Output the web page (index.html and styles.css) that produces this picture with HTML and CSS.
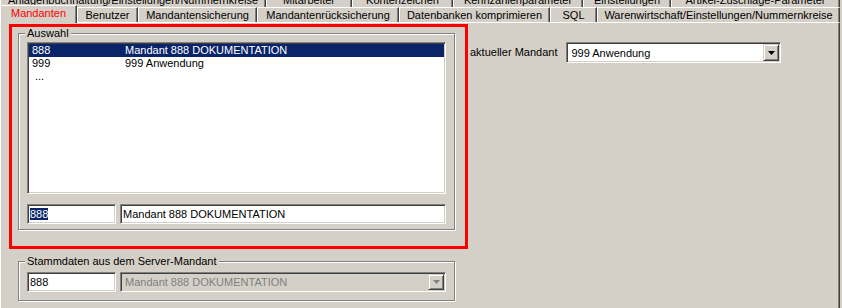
FILE: index.html
```html
<!DOCTYPE html>
<html>
<head>
<meta charset="utf-8" />
<title>Mandanten</title>
<link rel="stylesheet" href="styles.css">
</head>
<body>
<div class="window">
  <div class="tabs tabs-back">
    <span class="tab">Anlagenbuchhaltung/Einstellungen/Nummernkreise</span>
    <span class="tab">Mitarbeiter</span>
    <span class="tab">Kontenzeichen</span>
    <span class="tab">Kennzahlenparameter</span>
    <span class="tab">Einstellungen</span>
    <span class="tab">Artikel-Zuschläge-Parameter</span>
  </div>
  <div class="tabs tabs-front">
    <span class="tab active">Mandanten</span>
    <span class="tab">Benutzer</span>
    <span class="tab">Mandantensicherung</span>
    <span class="tab">Mandantenrücksicherung</span>
    <span class="tab">Datenbanken komprimieren</span>
    <span class="tab">SQL</span>
    <span class="tab">Warenwirtschaft/Einstellungen/Nummernkreise</span>
  </div>

  <div class="panel">
    <div class="left">
      <div class="marker">
        <div class="group">
          <div class="group-title">Auswahl</div>
          <div class="listbox">
            <div class="row selected"><span class="code">888</span><span>Mandant 888 DOKUMENTATION</span></div>
            <div class="row"><span class="code">999</span><span>999 Anwendung</span></div>
            <div class="row more">...</div>
          </div>
          <div class="fields">
            <div class="edit short"><span class="sel">888</span></div>
            <div class="edit long">Mandant 888 DOKUMENTATION</div>
          </div>
        </div>
      </div>

      <div class="group stamm">
        <div class="group-title">Stammdaten aus dem Server-Mandant</div>
        <div class="fields">
          <div class="edit short">888</div>
          <div class="combo long disabled">
            <span class="combo-text">Mandant 888 DOKUMENTATION</span>
            <span class="combo-btn"><svg width="7" height="4" viewBox="0 0 7 4"><path d="M0 0h7L3.5 4z"/></svg></span>
          </div>
        </div>
      </div>
    </div>

    <div class="current">
      <span class="lbl">aktueller Mandant</span>
      <div class="combo">
        <span class="combo-text">999 Anwendung</span>
        <span class="combo-btn"><svg width="7" height="4" viewBox="0 0 7 4"><path d="M0 0h7L3.5 4z"/></svg></span>
      </div>
    </div>
  </div>
</div>
</body>
</html>
```

FILE: styles.css
```css
*{
	margin:0;
	padding:0;
	box-sizing:border-box;
	}
body{
	background:#d4d0c8;
	}
.window{
	width:842px;
	height:308px;
	overflow:hidden;
	background:#d4d0c8;
	font:11px/13px "Liberation Sans", Arial, sans-serif;
	color:#000;
	}

/* tabs */
.tabs{
	display:flex;
	width:840px;
	}
.tab{
	flex:none;
	white-space:nowrap;
	overflow:hidden;
	text-align:center;
	border-top:1px solid #fff;
	border-left:1px solid #fff;
	border-right:1px solid #404040;
	box-shadow:inset -1px 0 0 #808080;
	}
.tabs-back{
	height:7px;
	overflow:hidden;
	}
.tabs-back .tab{
	height:18px;
	margin-top:-11px;
	padding-top:4px;
	}
.tabs-back .tab:nth-child(1){ width:266px; }
.tabs-back .tab:nth-child(2){ width:86px; }
.tabs-back .tab:nth-child(3){ width:101px; }
.tabs-back .tab:nth-child(4){ width:130px; }
.tabs-back .tab:nth-child(5){ width:88px; }
.tabs-back .tab:nth-child(6){ width:169px; }

.tabs-front{
	height:15px;
	}
.tabs-front .tab{
	height:15px;
	padding-top:1px;
	}
.tabs-front .tab:nth-child(1){ width:77px; }
.tabs-front .tab:nth-child(2){ width:61px; }
.tabs-front .tab:nth-child(3){ width:119px; }
.tabs-front .tab:nth-child(4){ width:142px; }
.tabs-front .tab:nth-child(5){ width:151px; }
.tabs-front .tab:nth-child(6){ width:47px; }
.tabs-front .tab:nth-child(7){ width:243px; }
.tabs-front .tab.active{
	height:18px;
	margin-top:-2px;
	padding-top:1px;
	color:#f00;
	background:#d4d0c8;
	position:relative;
	z-index:1;
	}

/* page */
.panel{
	width:840px;
	height:286px;
	display:flex;
	align-items:flex-start;
	padding:1px 0 0 8px;
	border-top:1px solid #fff;
	border-left:1px solid #fff;
	border-right:1px solid #404040;
	box-shadow:inset -1px 0 0 #808080;
	}
.marker{
	width:459px;
	height:225px;
	border:3px solid #f00;
	padding:6px 0 0 6px;
	}

.group{
	width:437px;
	border:1px solid #808080;
	box-shadow:inset 1px 1px 0 #fff, 1px 1px 0 #fff;
	padding:0 8px 5px;
	}
.group-title{
	display:table;
	margin:-7px 0 0 -2px;
	padding:0 2px;
	background:#d4d0c8;
	}
.stamm{
	margin:12px 0 0 9px;
	padding-bottom:8px;
	}
.stamm .fields{
	margin-top:4px;
	}

.sunken{
	border:1px solid;
	}
.listbox, .edit, .combo{
	border:1px solid;
	border-color:#808080 #fff #fff #808080;
	box-shadow:inset 1px 1px 0 #404040, inset -1px -1px 0 #d4d0c8;
	background:#fff;
	}
.listbox{
	margin-top:2px;
	height:152px;
	padding:1px;
	}
.row{
	height:13px;
	display:flex;
	white-space:nowrap;
	padding-left:3px;
	}
.row .code{
	width:93px;
	}
.row.selected{
	background:#0a246a;
	color:#fff;
	}
.row.more{
	padding-left:6px;
	}

.fields{
	display:flex;
	gap:4px;
	margin-top:10px;
	}
.edit{
	height:20px;
	padding:3px 0 0 2px;
	white-space:nowrap;
	}
.short{
	width:89px;
	}
.long{
	flex:1;
	}
.sel{
	background:#0a246a;
	color:#fff;
	}

.combo{
	height:21px;
	padding:1px;
	display:flex;
	justify-content:space-between;
	}
.stamm .combo{
	height:20px;
	}
.combo-text{
	padding:3px 0 0 3px;
	white-space:nowrap;
	}
.combo-btn{
	width:16px;
	display:flex;
	align-items:center;
	justify-content:center;
	background:#d4d0c8;
	border:1px solid;
	border-color:#d4d0c8 #404040 #404040 #d4d0c8;
	box-shadow:inset 1px 1px 0 #fff, inset -1px -1px 0 #808080;
	}
.combo.disabled{
	background:#d4d0c8;
	color:#808080;
	}
.combo.disabled .combo-text{
	padding-top:2px;
	}
.combo.disabled svg{
	fill:#808080;
	}

.current{
	display:flex;
	align-items:center;
	gap:9px;
	margin:18px 0 0 2px;
	}
.current .combo{
	width:215px;
	}
```
